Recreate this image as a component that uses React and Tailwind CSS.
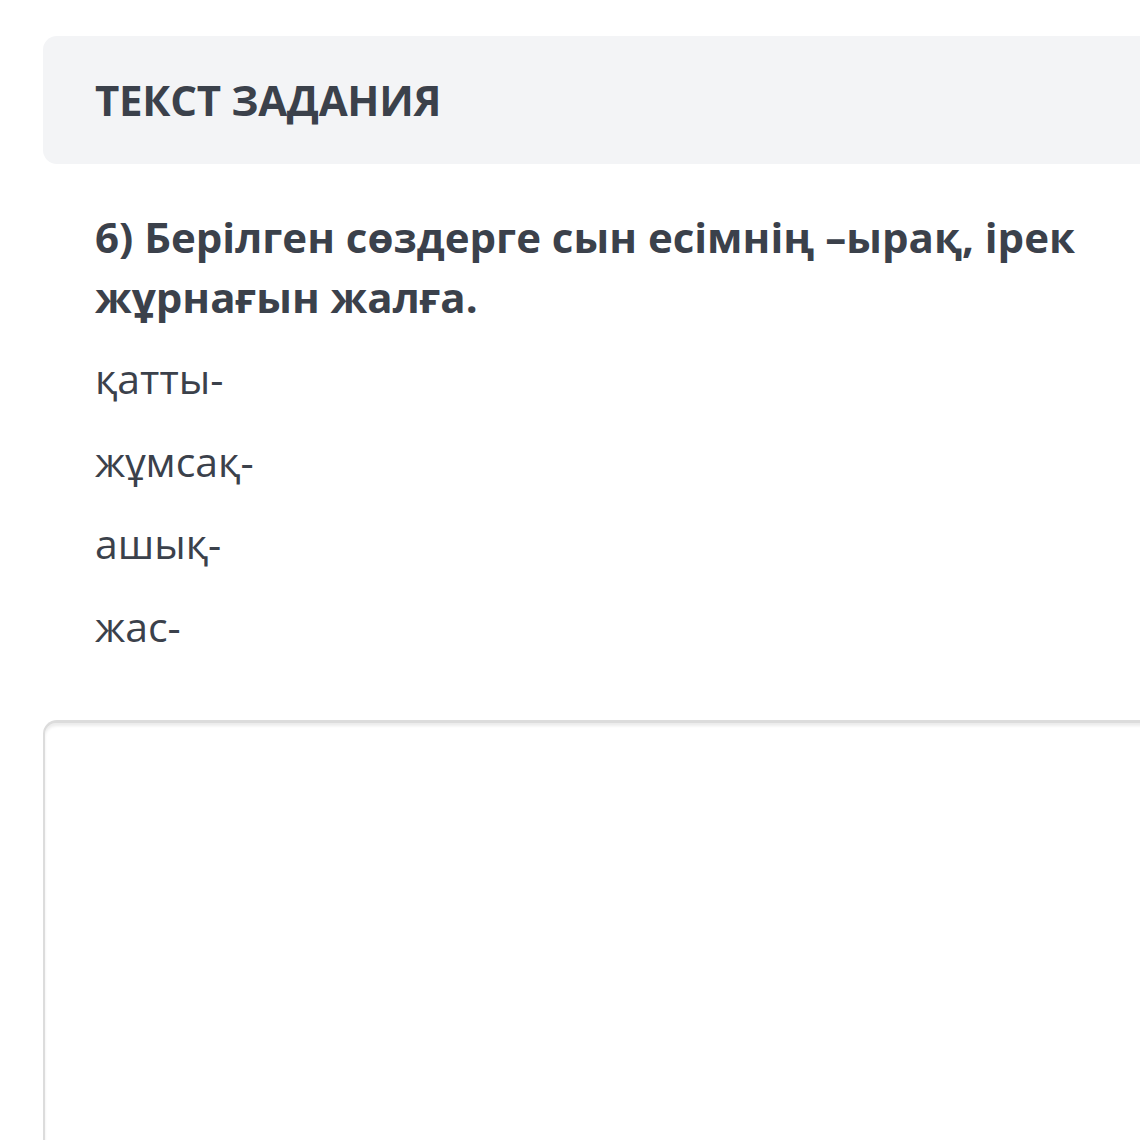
import React from "react";

const words = ["қатты-", "жұмсақ-", "ашық-", "жас-"];

const App = () => {
  return (
    <div
      className="w-[1140px] h-[1140px] overflow-hidden bg-white text-[#3b414b]"
      style={{ fontFamily: '"Open Sans", "Noto Sans", sans-serif' }}
    >
      <div className="ml-[43px] w-[1200px] pt-[36px]">
        {/* Header */}
        <div className="bg-[#f3f4f6] rounded-[14px] h-[128px] flex items-center pl-[52px]">
          <h1 className="text-[42px] font-bold leading-none tracking-[-0.3px]">ТЕКСТ ЗАДАНИЯ</h1>
        </div>

        {/* Task text */}
        <div className="pl-[52px] pt-[43px] w-[1090px]">
          <p className="text-[42px] font-bold leading-[60px]">
            6) Берілген сөздерге сын есімнің –ырақ, ірек жұрнағын жалға.
          </p>
          <div className="mt-[10px] flex flex-col">
            {words.map((w, i) => (
              <p key={i} className="text-[41px] leading-[82.5px]">
                {w}
              </p>
            ))}
          </div>
        </div>

        {/* Answer box */}
        <div className="mt-[53px] h-[500px] rounded-tl-[14px] border-l-2 border-t-[3px] border-[#dcdcdc] shadow-[inset_0_3px_3px_rgba(0,0,0,0.08)]"></div>
      </div>
    </div>
  );
};

export default App;
